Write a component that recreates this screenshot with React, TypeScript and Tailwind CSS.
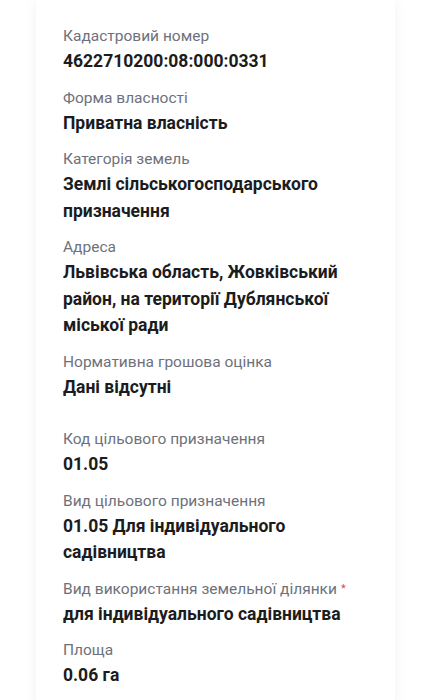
import React from 'react';

type Field = { label: string; value: string; required?: boolean; spaced?: boolean };

const fields: Field[] = [
  { label: 'Кадастровий номер', value: '4622710200:08:000:0331' },
  { label: 'Форма власності', value: 'Приватна власність' },
  { label: 'Категорія земель', value: 'Землі сільськогосподарського призначення' },
  { label: 'Адреса', value: 'Львівська область, Жовківський район, на території Дублянської міської ради' },
  { label: 'Нормативна грошова оцінка', value: 'Дані відсутні' },
  { label: 'Код цільового призначення', value: '01.05', spaced: true },
  { label: 'Вид цільового призначення', value: '01.05 Для індивідуального садівництва' },
  { label: 'Вид використання земельної ділянки', value: 'для індивідуального садівництва', required: true },
  { label: 'Площа', value: '0.06 га' },
];

export default function App() {
  return (
    <div className="min-h-screen bg-white font-['Roboto',sans-serif]">
      <div className="mx-[36px] bg-white shadow-[0_0_12px_rgba(0,0,0,0.06)] px-[27px] pt-[25px] pb-[20px] min-h-[700px]">
        <div className="flex flex-col gap-[12px]">
          {fields.map(f => (
            <div key={f.label} className={f.spaced ? 'mt-[16px]' : ''}>
              <p className="text-[15.5px] leading-[23px] text-[#6e717b]">
                {f.label}
                {f.required && <sup className="text-[#e0475a] text-[11px] ml-[4px] relative -top-[2px]">*</sup>}
              </p>
              <p className="text-[17.5px] leading-[26.5px] font-bold text-[#1b1c20]">{f.value}</p>
            </div>
          ))}
        </div>
      </div>
    </div>
  );
}
